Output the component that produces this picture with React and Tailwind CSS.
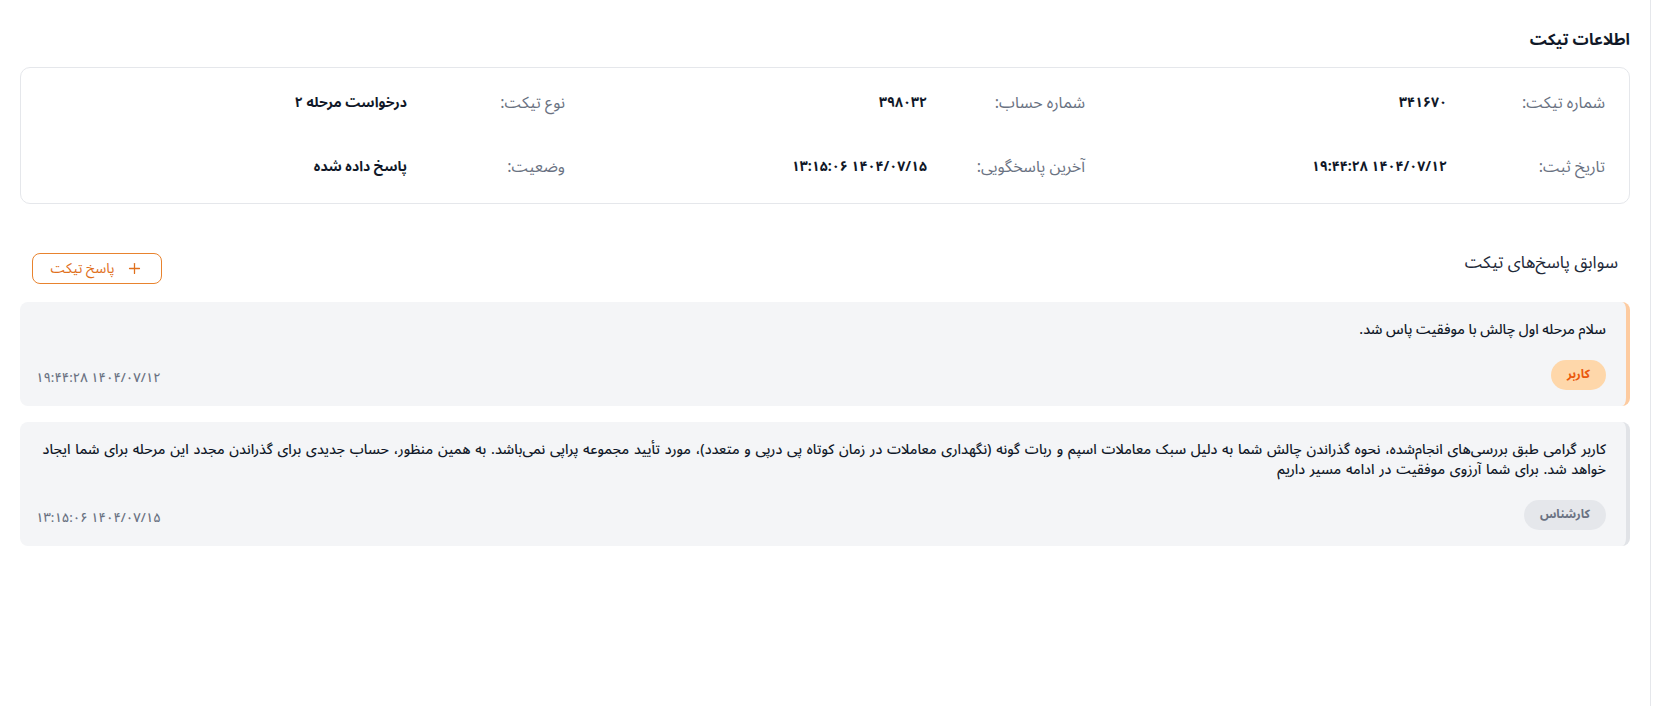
import { Plus } from "lucide-react";

const font = { fontFamily: '"Noto Sans Arabic", "Vazirmatn", "DejaVu Sans", sans-serif' };

const info = [
  { label: "شماره تیکت:", value: "۳۴۱۶۷۰" },
  { label: "شماره حساب:", value: "۳۹۸۰۳۲" },
  { label: "نوع تیکت:", value: "درخواست مرحله ۲" },
  { label: "تاریخ ثبت:", value: "۱۹:۴۴:۲۸ ۱۴۰۴/۰۷/۱۲", ltr: true },
  { label: "آخرین پاسخگویی:", value: "۱۳:۱۵:۰۶ ۱۴۰۴/۰۷/۱۵", ltr: true },
  { label: "وضعیت:", value: "پاسخ داده شده" },
];

function InfoItem({ label, value, ltr }) {
  return (
    <div className="flex items-center">
      <span className="w-[158px] shrink-0 text-[16px] leading-6 text-gray-500">{label}</span>
      <span dir={ltr ? "ltr" : undefined} className="text-[14px] leading-6 font-bold text-gray-900">
        {value}
      </span>
    </div>
  );
}

function Message({ children, badge, date, tone, textClass = "" }) {
  const isUser = tone === "user";
  return (
    <div
      className={
        "rounded-lg bg-[#f4f5f7] pt-[18px] pb-4 pr-5 pl-4 border-r-4 " +
        (isUser ? "border-[#fdcba0]" : "border-[#e1e3e7]")
      }
    >
      <div className={"text-[14px] leading-5 font-medium text-gray-900 " + textClass}>{children}</div>
      <div className="mt-5 flex items-center justify-between">
        <span
          className={
            "h-[30px] px-4 rounded-full flex items-center text-[12px] font-bold " +
            (isUser ? "bg-[#fed7aa] text-[#ea580c]" : "bg-[#e5e7eb] text-gray-500")
          }
        >
          {badge}
        </span>
        <span dir="ltr" className="mt-2 text-[13px] font-medium text-gray-500">{date}</span>
      </div>
    </div>
  );
}

export default function App() {
  return (
    <div className="flex min-h-[706px] bg-white" style={font}>
      <main dir="rtl" className="flex-1 px-5 pt-[28px]">
        <h1 className="text-[16px] leading-6 font-bold text-gray-900 mb-[15px]">اطلاعات تیکت</h1>

        <div className="rounded-[10px] border border-gray-200 px-6 pt-[23px] pb-6 grid grid-cols-3 gap-y-10">
          {info.map((item) => (
            <InfoItem key={item.label} {...item} />
          ))}
        </div>

        <div className="mt-[49px] mb-[18px] flex items-start justify-between px-3">
          <h2 className="text-[17px] leading-5 text-gray-800">سوابق پاسخ{"\u200c"}های تیکت</h2>
          <button className="w-[130px] h-[31px] rounded-lg border border-[#e8832e] text-[#e0701c] text-[14px] flex items-center justify-center gap-3">
            <Plus size={17} strokeWidth={1.8} />
            <span>پاسخ تیکت</span>
          </button>
        </div>

        <div className="flex flex-col gap-4">
          <Message tone="user" badge="کاربر" date="۱۹:۴۴:۲۸ ۱۴۰۴/۰۷/۱۲">
            سلام مرحله اول چالش با موفقیت پاس شد.
          </Message>
          <Message tone="staff" badge="کارشناس" date="۱۳:۱۵:۰۶ ۱۴۰۴/۰۷/۱۵" textClass="[word-spacing:1.15px]">
            کاربر گرامی طبق بررسی{"\u200c"}های انجام{"\u200c"}شده، نحوه گذراندن چالش شما به دلیل سبک معاملات اسپم و ربات گونه (نگهداری معاملات در زمان کوتاه پی درپی و متعدد)، مورد تأیید مجموعه پراپی نمی{"\u200c"}باشد. به همین منظور، حساب جدیدی برای گذراندن مجدد این مرحله برای شما ایجاد
            <br />
            خواهد شد. برای شما آرزوی موفقیت در ادامه مسیر داریم
          </Message>
        </div>
      </main>
      <aside className="w-[14px] shrink-0 border-l border-gray-200" />
    </div>
  );
}
